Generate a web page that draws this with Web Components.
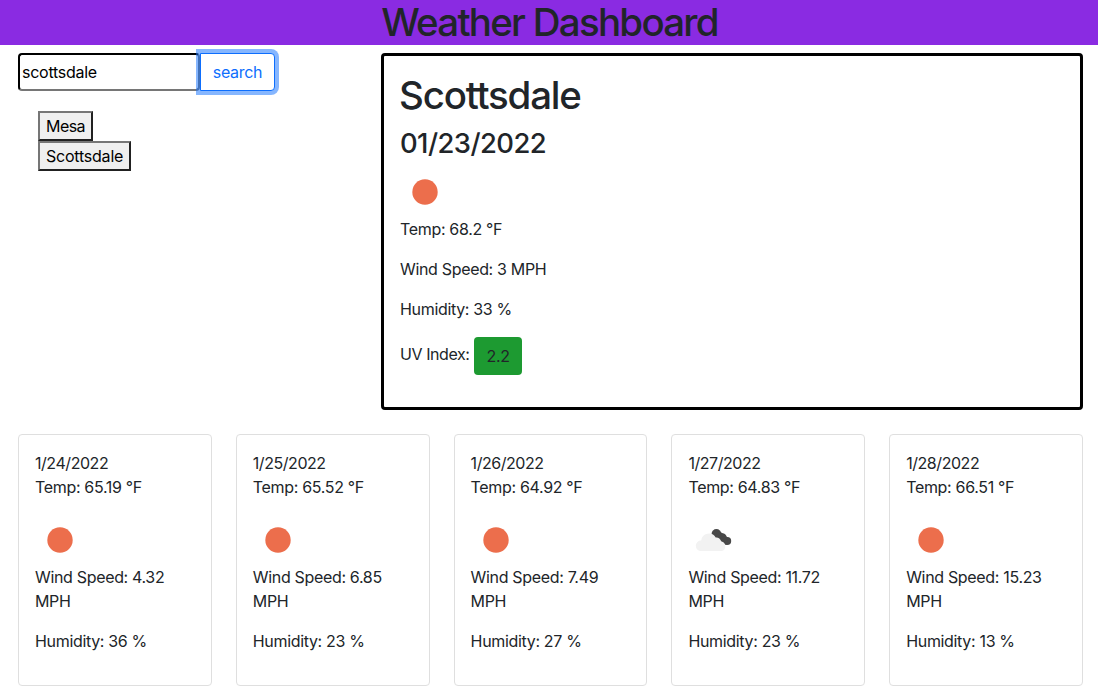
<!DOCTYPE html>
<html lang="en">
<head>
<meta charset="utf-8">
<title>Weather Dashboard</title>
<style>
  *, *::before, *::after { box-sizing: border-box; }
  html, body { margin: 0; height: 100%; overflow: hidden; }
  body { font-family: Inter, "Liberation Sans", sans-serif; font-size: 16px; line-height: 24px; color: #212529; background: #fff; letter-spacing: -0.33px; }
</style>
</head>
<body>
<weather-app></weather-app>
<script>
const base = '*,*::before,*::after{box-sizing:border-box} h1,h2,p,ul{margin:0;padding:0}';
const icons = {
  sun: '<circle cx="25" cy="25" r="12.7" fill="#ec6e4c"/>',
  clouds: '<g fill="#484848"><circle cx="28.4" cy="18.8" r="4.8"/><circle cx="34.4" cy="22.5" r="4.2"/><circle cx="39.2" cy="26" r="4"/><path d="M25.4 20L38.4 30L40.4 23L31.4 16Z"/></g><path fill="#f2f2f2" d="M13 36A5.3 5.3 0 0 1 13.2 25.4A7.8 7.8 0 0 1 27.7 22.6A4.7 4.7 0 0 1 33.2 26.6A4.8 4.8 0 0 1 33.6 36Z"/>'
};
function define(name, html) {
  customElements.define(name, class extends HTMLElement {
    connectedCallback() {
      if (this.shadowRoot) return;
      this.attachShadow({ mode: 'open' }).innerHTML =
        '<style>' + base + '</style>' + (typeof html === 'function' ? html(this) : html);
    }
  });
}
define('weather-icon', el => `<style>:host{display:block;width:50px;height:50px}svg{display:block}</style>
  <svg width="50" height="50" viewBox="0 0 50 50">${icons[el.getAttribute('name')]}</svg>`);

define('page-header', `<style>
  :host{display:block;height:45px;background:#8a2be2;text-align:center}
  h1{font-size:38.47px;line-height:45px;font-weight:540;letter-spacing:-1.73px;padding-left:1px}
  </style><h1><slot></slot></h1>`);

define('search-form', `<style>
  :host{display:flex;height:38px}
  input{width:182px;border:2px inset #767676;border-color:#212121 #767676 #767676 #212121;border-radius:4px;padding:1px 2px;margin:0;background:#fff;color:#000;font:inherit;letter-spacing:-.26px;outline:0}
  button{margin:0;width:75px;padding:6px 0;border:1px solid #0d6efd;border-radius:0 4px 4px 0;background:#fff;color:#0d6efd;font:inherit;letter-spacing:inherit;box-shadow:0 0 0 4px rgba(13,110,253,.5)}
  </style><input value="scottsdale" aria-label="City"><button>search</button>`);

define('history-button', `<style>
  :host{display:block;height:30px}
  button{display:block;height:30px;margin:0;padding:1px 6px;border:2px solid;border-color:#767676 #212121 #212121 #767676;border-radius:0;background:#efefef;color:#000;font:inherit;letter-spacing:inherit;white-space:nowrap}
  </style><button><slot></slot></button>`);

define('current-weather', `<style>
  :host{display:block;height:357px;border:3px solid #000;border-radius:4px;padding:16px}
  h1{font-size:38.47px;line-height:46.16px;font-weight:540;margin:0 0 8px -1px;letter-spacing:-1.2px}
  h2{font-size:27.4px;line-height:34.9px;font-weight:520;margin-bottom:6px;letter-spacing:-.56px}
  p{margin-bottom:16px}
  .uv-label{letter-spacing:-.42px}
  .uv{display:inline-block;vertical-align:middle;padding:7px 13px;height:38px;width:48px;border-radius:4px;background:#1d9a31}
  </style>
  <h1>Scottsdale</h1><h2>01/23/2022</h2>
  <weather-icon name="sun"></weather-icon>
  <p>Temp: 68.2 °F</p><p>Wind Speed: 3 MPH</p><p>Humidity: 33 %</p>
  <p><span class="uv-label">UV Index: </span><span class="uv">2.2</span></p>`);

define('forecast-card', el => `<style>
  :host{display:block;height:252px;border:1px solid #dfdfdf;border-radius:4px;padding:16px}
  p{margin-bottom:16px}
  .date{letter-spacing:-.45px}
  </style>
  <div class="date">${el.getAttribute('date')}</div><p>Temp: ${el.getAttribute('temp')} °F</p>
  <weather-icon name="${el.getAttribute('icon')}"></weather-icon>
  <p>Wind Speed: ${el.getAttribute('wind')} MPH</p>
  <p>Humidity: ${el.getAttribute('humidity')} %</p>`);

define('weather-app', `<style>
  :host{display:block}
  .top{display:grid;grid-template-columns:260px 702px;justify-content:space-between;padding:8px 15px 24px 18px}
  .history{padding:20px 0 0 20px}
  .mesa{letter-spacing:-.55px}
  .scottsdale{letter-spacing:-.22px}
  .days{display:grid;grid-template-columns:repeat(5,1fr);gap:24px;padding:0 15px 0 18px}
  </style>
  <page-header>Weather Dashboard</page-header>
  <div class="top">
    <div><search-form></search-form>
      <div class="history"><history-button class="mesa">Mesa</history-button><history-button class="scottsdale">Scottsdale</history-button></div></div>
    <current-weather></current-weather>
  </div>
  <div class="days">
    <forecast-card date="1/24/2022" temp="65.19" icon="sun" wind="4.32" humidity="36"></forecast-card>
    <forecast-card date="1/25/2022" temp="65.52" icon="sun" wind="6.85" humidity="23"></forecast-card>
    <forecast-card date="1/26/2022" temp="64.92" icon="sun" wind="7.49" humidity="27"></forecast-card>
    <forecast-card date="1/27/2022" temp="64.83" icon="clouds" wind="11.72" humidity="23"></forecast-card>
    <forecast-card date="1/28/2022" temp="66.51" icon="sun" wind="15.23" humidity="13"></forecast-card>
  </div>`);
</script>
</body>
</html>
